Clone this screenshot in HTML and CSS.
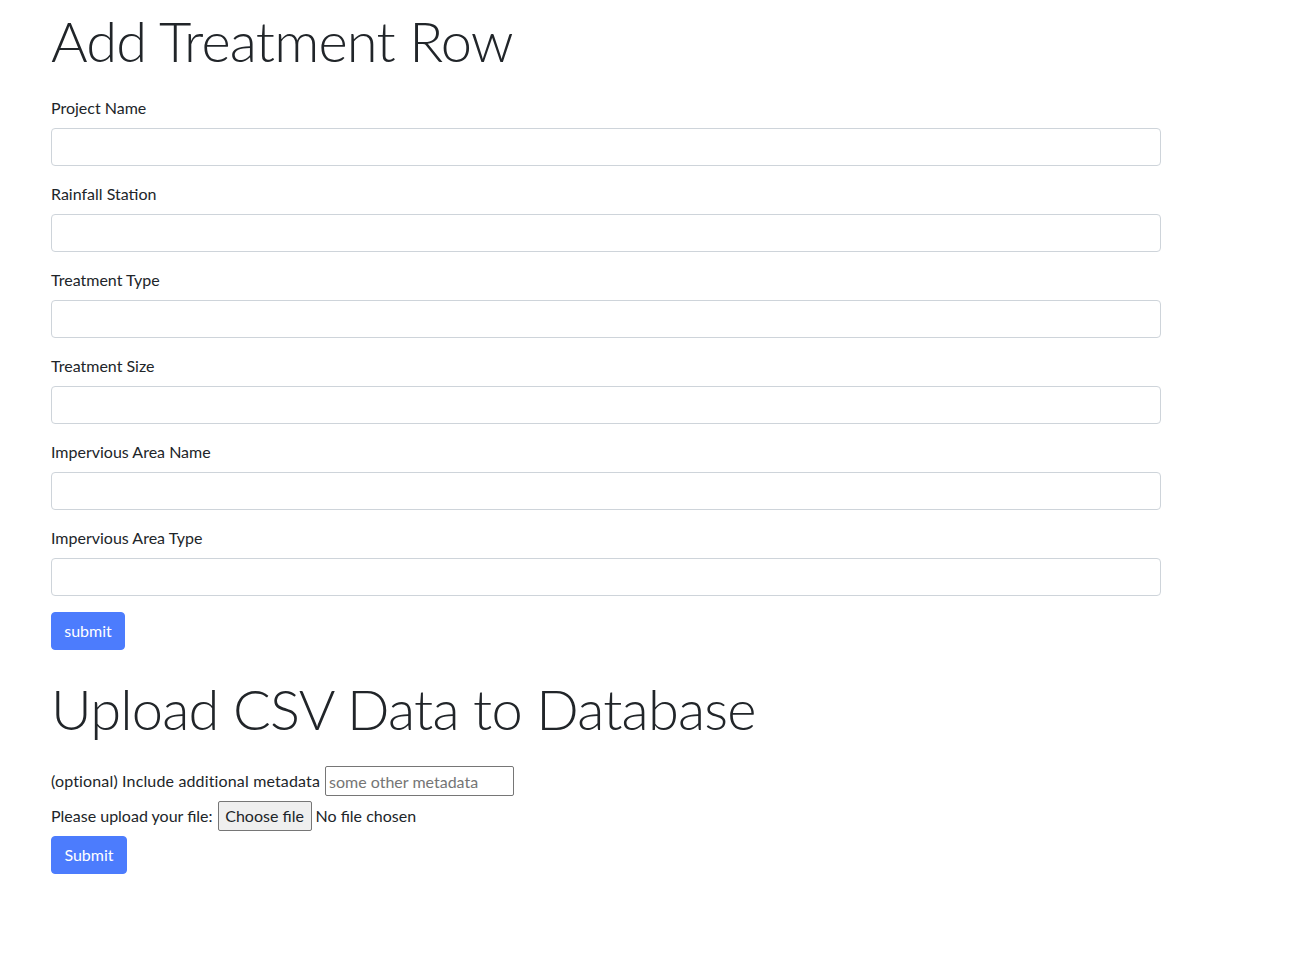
FILE: index.html
```html
<!DOCTYPE html>
<html lang="en">
<head>
<meta charset="utf-8">
<title>Add Treatment Row</title>
<link rel="stylesheet" href="styles.css">
</head>
<body>
<div class="container">
  <h1 class="display first">Add Treatment Row</h1>
  <form class="treatment-form">
    <div class="form-group">
      <label class="form-label">Project Name</label>
      <input class="form-control" type="text">
    </div>
    <div class="form-group">
      <label class="form-label">Rainfall Station</label>
      <input class="form-control" type="text">
    </div>
    <div class="form-group">
      <label class="form-label">Treatment Type</label>
      <input class="form-control" type="text">
    </div>
    <div class="form-group">
      <label class="form-label">Treatment Size</label>
      <input class="form-control" type="text">
    </div>
    <div class="form-group">
      <label class="form-label">Impervious Area Name</label>
      <input class="form-control" type="text">
    </div>
    <div class="form-group">
      <label class="form-label">Impervious Area Type</label>
      <input class="form-control" type="text">
    </div>
    <button class="btn btn-small" type="button">submit</button>
  </form>

  <h1 class="display second">Upload CSV Data to Database</h1>
  <form class="upload-form">
    <div class="row">
      <span class="meta-label">(optional) Include additional metadata</span>
      <input class="plain-input" type="text" placeholder="some other metadata">
    </div>
    <div class="row">
      <span>Please upload your file:</span>
      <span class="file-btn">Choose file</span>
      <span class="file-status">No file chosen</span>
    </div>
    <button class="btn btn-big" type="button">Submit</button>
  </form>
</div>
</body>
</html>
```

FILE: styles.css
```css
* { box-sizing: border-box; }
body {
  margin: 0;
  font-family: "Lato", "Open Sans", sans-serif;
  font-size: 16px;
  line-height: 24px;
  color: #212529;
  background: #fff;
}
.container {
  width: 1161px;
  padding-left: 51px;
}
.display {
  font-family: "Lato", sans-serif;
  font-size: 56px;
  font-weight: 300;
  line-height: 67px;
  letter-spacing: -0.8px;
  margin: 0;
}
.first { margin-top: 7px; margin-bottom: 22px; }
.second { margin-top: 25px; margin-bottom: 24px; }
.form-group {
  display: flex;
  flex-direction: column;
  margin-bottom: 16px;
}
.form-label {
  display: block;
  margin-bottom: 8px;
}
.form-control {
  display: block;
  width: 1110px;
  height: 38px;
  border: 1px solid #ced4da;
  border-radius: 4px;
  padding: 6px 12px;
  font: inherit;
  background: #fff;
}
.btn {
  display: block;
  height: 38px;
  border: 1px solid #4c7cfd;
  border-radius: 4px;
  background: #4c7cfd;
  color: #fff;
  font: inherit;
  padding: 0;
  text-align: center;
  cursor: pointer;
}
.btn-small { width: 74px; }
.btn-big { width: 76px; }
.upload-form {
  display: flex;
  flex-direction: column;
  gap: 5px;
}
.row {
  display: flex;
  align-items: center;
  height: 30px;
  gap: 5px;
}
.meta-label { letter-spacing: 0.15px; }
.plain-input {
  width: 189px;
  height: 30px;
  border: 1px solid #767676;
  border-radius: 2px;
  padding: 1px 3px;
  font: inherit;
  color: #212529;
}
.plain-input::placeholder { color: #757575; }
.file-btn {
  display: inline-flex;
  align-items: center;
  justify-content: center;
  width: 94px;
  height: 30px;
  border: 1px solid #767676;
  border-radius: 2px;
  background: #efefef;
}
.file-status { margin-left: -1px; }
```
